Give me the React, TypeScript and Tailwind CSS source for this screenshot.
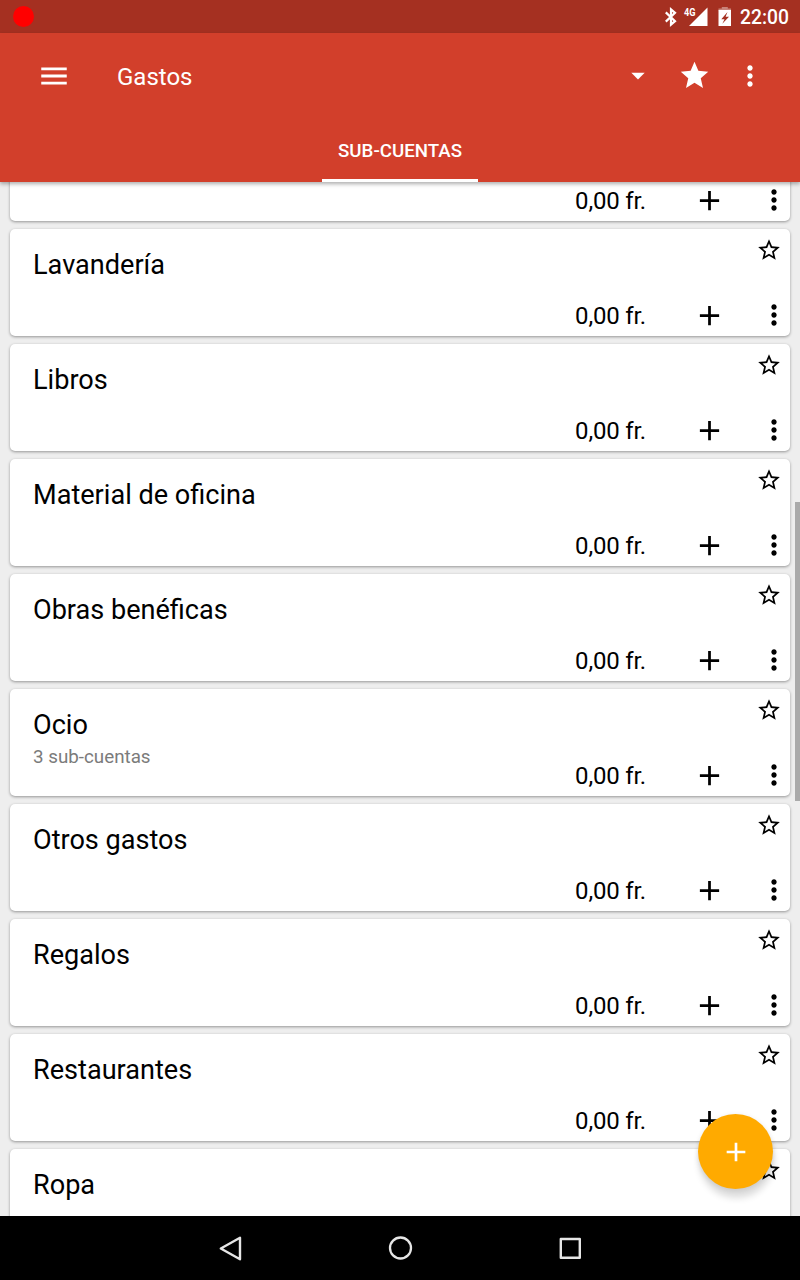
import React from "react";

type Account = { name?: string; detail?: string; balance?: string };

const accounts: Account[] = [
  { balance: "0,00 fr." },
  { name: "Lavandería", balance: "0,00 fr." },
  { name: "Libros", balance: "0,00 fr." },
  { name: "Material de oficina", balance: "0,00 fr." },
  { name: "Obras benéficas", balance: "0,00 fr." },
  { name: "Ocio", detail: "3 sub-cuentas", balance: "0,00 fr." },
  { name: "Otros gastos", balance: "0,00 fr." },
  { name: "Regalos", balance: "0,00 fr." },
  { name: "Restaurantes", balance: "0,00 fr." },
  { name: "Ropa" },
];

function Icon({ d, className }: { d: string; className: string }) {
  return (
    <svg viewBox="0 0 24 24" fill="currentColor" className={"block shrink-0 " + className}>
      <path d={d} />
    </svg>
  );
}

const MORE =
  "M12 8c1.1 0 2-.9 2-2s-.9-2-2-2-2 .9-2 2 .9 2 2 2zm0 2c-1.1 0-2 .9-2 2s.9 2 2 2 2-.9 2-2-.9-2-2-2zm0 6c-1.1 0-2 .9-2 2s.9 2 2 2 2-.9 2-2-.9-2-2-2z";
const PLUS = "M19 13h-6v6h-2v-6H5v-2h6V5h2v6h6z";
const STAR = "M12 17.27L18.18 21l-1.64-7.03L22 9.24l-7.19-.61L12 2 9.19 8.63 2 9.24l5.46 4.73L5.82 21z";
const STAR_OUTLINE =
  "M22 9.24l-7.19-.62L12 2 9.19 8.63 2 9.24l5.46 4.73L5.82 21 12 17.27 18.18 21l-1.63-7.03L22 9.24zM12 15.4l-3.76 2.27 1-4.28-3.32-2.88 4.38-.38L12 6.1l1.71 4.04 4.38.38-3.32 2.88 1 4.28L12 15.4z";

function StatusBar() {
  return (
    <div className="flex h-[33px] shrink-0 items-center bg-[#a53021] pl-[13px] pr-2.5 text-white">
      <div className="size-[21px] rounded-full bg-[#ff0000]" />
      <svg viewBox="0 0 14 20" className="ml-auto block h-5 w-3.5" fill="none" stroke="currentColor" strokeWidth="2.2">
        <path d="M1.8 5.4L11 14.2 7 17.6V2.4L11 5.8 1.8 14.6" />
      </svg>
      <svg viewBox="0 0 26 20" className="ml-[5px] block h-5 w-[26px]" fill="currentColor">
        <path d="M24.5 .5v18.5H6z" />
        <path d="M0 0h12.5v10H0z" fill="#a53021" />
        <text x="1" y="9" fontFamily="Roboto" fontWeight="700" fontSize="10.5" textLength="11.5" lengthAdjust="spacingAndGlyphs">4G</text>
      </svg>
      <svg viewBox="0 0 14 20" className="ml-[9px] block h-5 w-3.5">
        <path d="M3.8 0h6v1.6h3.2V3.5H.5V1.6h3.3z" fill="#c98379" />
        <path d="M.5 3h12.5v16H.5z" fill="#fff" />
        <path d="M9.5 5L3.3 12.3h3.2L4.3 16.8 11 9.8H7.6z" fill="#a53021" />
      </svg>
      <span className="ml-2 w-[50px] whitespace-nowrap pt-0.5 text-[19.3px] font-medium leading-none">22:00</span>
    </div>
  );
}

function AppBar() {
  return (
    <header className="relative z-10 flex h-[149px] shrink-0 flex-col bg-[#d23f2b] text-white shadow-[0_2px_4px_rgba(0,0,0,0.32)]">
      <div className="flex h-[85px] items-center pl-[37px] pr-[34.5px]">
        <Icon d="M3 18h18v-2H3v2zm0-5h18v-2H3v2zm0-7v2h18V6H3z" className="mt-px size-[34px]" />
        <h1 className="ml-[46px] pt-0.5 text-[24px] leading-none">Gastos</h1>
        <Icon d="M7 9.6l5 5 5-5z" className="ml-auto size-8" />
        <Icon d={STAR} className="ml-[23.5px] mr-[23px] size-[33px]" />
        <Icon d={MORE} className="size-8" />
      </div>
      <div className="flex grow justify-center">
        <div className="flex w-[156px] items-center justify-center border-b-3 border-white pt-[5px] text-[18.7px] font-medium leading-none">
          SUB-CUENTAS
        </div>
      </div>
    </header>
  );
}

function AccountCard({ name, detail, balance }: Account) {
  return (
    <li className="flex h-[107px] shrink-0 flex-col justify-between rounded-[5px] bg-white pl-[23px] shadow-[0_1px_3px_rgba(0,0,0,0.38)]">
      <div className="flex justify-between pr-[8.3px]">
        <div className="pt-5">
          {name && <h2 className="text-[27.1px] leading-8">{name}</h2>}
          {detail && <p className="pt-[5px] text-[18.8px] leading-[22px] text-[#7b7b7b]">{detail}</p>}
        </div>
        <Icon d={STAR_OUTLINE} className="mt-2 size-[26px]" />
      </div>
      {balance && (
        <div className="-mt-10 flex items-center justify-end pb-1">
          <span className="mr-[47px] pt-0.5 text-[24px] leading-none tracking-[-0.2px]">{balance}</span>
          <Icon d={PLUS} className="mt-px size-[33px]" />
          <Icon d={MORE} className="ml-8 size-8" />
        </div>
      )}
    </li>
  );
}

export default function App() {
  return (
    <div className="relative flex h-[1280px] w-[800px] flex-col overflow-hidden bg-[#eee] font-['Roboto',sans-serif] text-black">
      <StatusBar />
      <AppBar />
      <main className="relative min-h-0 grow overflow-hidden px-2.5">
        <ul className="-mt-[68px] flex flex-col gap-2">
          {accounts.map((account, index) => (
            <AccountCard key={index} {...account} />
          ))}
        </ul>
        <div className="absolute right-0 top-80 h-[299px] w-[5px] bg-[#aaa]" />
        <button
          aria-label="Añadir"
          className="absolute bottom-[27px] right-[27px] flex size-[75px] items-center justify-center rounded-full bg-[#ffaa00] text-white shadow-[1px_9px_7px_rgba(0,0,0,0.14),0_1px_5px_rgba(0,0,0,0.1)]"
        >
          <Icon d={PLUS} className="size-8" />
        </button>
      </main>
      <nav className="flex h-16 shrink-0 items-center justify-center gap-[138px] bg-black text-[#e6e6e6]">
        <svg viewBox="0 0 32 32" className="block size-8" fill="none" stroke="currentColor" strokeWidth="2.4" strokeLinejoin="round">
          <path d="M26 5.8v21.5L6.8 16.5z" />
        </svg>
        <svg viewBox="0 0 32 32" className="block size-8" fill="none" stroke="currentColor" strokeWidth="2.3">
          <circle cx="16.5" cy="16" r="10.5" />
        </svg>
        <svg viewBox="0 0 32 32" className="block size-8" fill="none" stroke="currentColor" strokeWidth="2.4" strokeLinejoin="round">
          <path d="M6.8 7h19v18.8h-19z" />
        </svg>
      </nav>
    </div>
  );
}
